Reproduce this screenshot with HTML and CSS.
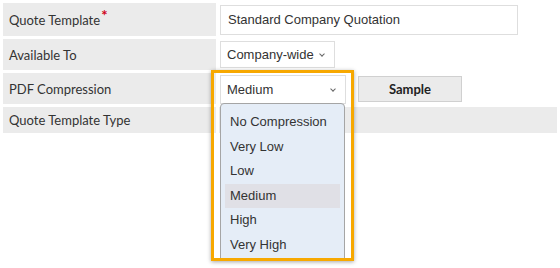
FILE: index.html
```html
<!DOCTYPE html>
<html lang="en">

<head>
  <meta charset="UTF-8">
  <title>Quote Template</title>
  <link rel="stylesheet" href="styles.css">
</head>

<body>
  <div class="form">
    <div class="label">Quote Template<span class="req">*</span></div>
    <div class="value">
      <div class="input">Standard Company Quotation</div>
    </div>

    <div class="label">Available To</div>
    <div class="value">
      <div class="select select-avail">Company-wide<span class="chev"></span></div>
    </div>

    <div class="label">PDF Compression</div>
    <div class="value value-pdf">
      <div class="select select-pdf">Medium<span class="chev"></span></div>
      <div class="btn">Sample</div>
    </div>

    <div class="label row-last">Quote Template Type</div>
    <div class="value row-last"></div>
  </div>

  <ul class="dropdown">
    <li>No Compression</li>
    <li>Very Low</li>
    <li>Low</li>
    <li class="active">Medium</li>
    <li>High</li>
    <li>Very High</li>
  </ul>
  <div class="highlight"></div>
</body>

</html>
```

FILE: styles.css
```css
* {
  box-sizing: border-box;
}

body,
html {
  width: 100%;
  height: 100%;
  padding: 0;
  margin: 0;
  background: #fff;
  overflow: hidden;
}

.form {
  display: grid;
  grid-template-columns: 213px 1fr;
  grid-template-rows: 33px 31px 31px 26px;
  gap: 3px;
  padding: 3px;
  color: #333;
}

.label {
  background: #ebebeb;
  display: flex;
  align-items: center;
  padding-left: 6px;
  font-family: Lato, "Liberation Sans", sans-serif;
  font-size: 13px;
}

.req {
  color: #d0021b;
  font-size: 15px;
  align-self: flex-start;
  margin-top: 3px;
  margin-left: 1px;
  font-weight: bold;
}

.value {
  display: flex;
  align-items: flex-start;
  padding: 2px 0 0 1px;
  font-family: "Liberation Sans", Arial, sans-serif;
  font-size: 13px;
}

.value-pdf {
  gap: 12px;
}

.row-last {
  background: #ebebeb;
}

.input {
  width: 298px;
  height: 30px;
  border: 1px solid #dedede;
  padding-left: 7px;
  line-height: 28px;
}

.select {
  position: relative;
  height: 27px;
  border: 1px solid #dedede;
  padding-left: 6px;
  line-height: 25px;
  background: #fff;
}

.select-avail {
  width: 115px;
}

.select-pdf {
  width: 126px;
  height: 29px;
  line-height: 27px;
}

.chev {
  position: absolute;
  right: 10px;
  top: 50%;
  width: 4px;
  height: 4px;
  margin-top: -3px;
  border-right: 1px solid #666;
  border-bottom: 1px solid #666;
  transform: rotate(45deg);
}

.btn {
  width: 104px;
  height: 26px;
  margin-top: 1px;
  background: #ebebeb;
  border: 1px solid #d0d0d0;
  text-align: center;
  line-height: 24px;
  font-family: Lato, "Liberation Sans", sans-serif;
  font-weight: bold;
  color: #222;
}

.dropdown {
  position: absolute;
  left: 220px;
  top: 103px;
  width: 125px;
  height: 157px;
  margin: 0;
  padding: 6px 4px 0;
  list-style-type: none;
  background: #e5edf7;
  border: 1px solid #a5a5a5;
  border-radius: 4px 4px 0 0;
  font-family: "Liberation Sans", Arial, sans-serif;
  font-size: 13px;
  color: #333;
}

.dropdown li {
  height: 24.5px;
  line-height: 24.5px;
  padding-left: 5px;
}

.dropdown li.active {
  background: #e0e0e6;
}

.highlight {
  position: absolute;
  left: 211px;
  top: 70px;
  width: 143px;
  height: 191px;
  border: 3px solid #f7a800;
  box-shadow: 0 1px 4px rgba(0, 0, 0, 0.35);
}
```
